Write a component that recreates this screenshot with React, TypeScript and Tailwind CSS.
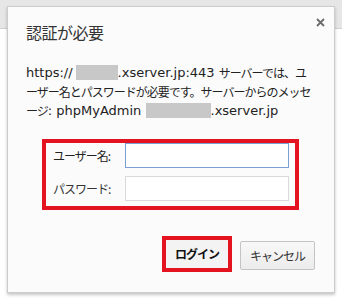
import React from "react";

const J = ({ children }: { children: React.ReactNode }) => (
  <span className="text-[12px] tracking-[-1px]" style={{ fontFamily: '"Noto Sans CJK JP", sans-serif' }}>
    {children}
  </span>
);

export default function App() {
  return (
    <div
      className="w-[342px] h-[300px] overflow-hidden bg-[linear-gradient(to_bottom,#e6e6e6_0,#e6e6e6_28px,#cfcfcf_28px,#cfcfcf_29px,#ffffff_29px)] pt-[6px] pl-[7px]"
      style={{ fontFamily: '"DejaVu Sans", "Noto Sans CJK JP", sans-serif' }}
    >
      <div className="w-[328px] h-[287px] bg-[#fbfbfb] border border-[#cccccc] shadow-[0_2px_3px_rgba(0,0,0,0.22)] flex flex-col">
        {/* header */}
        <div className="flex justify-between pl-[18px] pr-[9px] pt-[15px]">
          <div
            className="text-[16px] leading-[20px] text-[#333] tracking-[-0.5px]"
            style={{ fontFamily: '"Noto Sans CJK JP", sans-serif' }}
          >
            認証が必要
          </div>
          <svg width="9" height="9" viewBox="0 0 9 9" className="mt-[-4px]">
            <path d="M1 1L8 8M8 1L1 8" stroke="#6b6b6b" strokeWidth="1.8" />
          </svg>
        </div>
        {/* message */}
        <div className="mt-[21px] pl-[18px] text-[13px] leading-[19px] text-[#222]">
          <div className="flex items-center whitespace-nowrap h-[19px]">
            <span>https://</span>
            <span className="inline-block w-[42px] h-[15px] bg-[#c8c8c8] ml-[3px]" />
            <span>.xserver.jp:443&nbsp;</span>
            <J>サーバーでは、ユ</J>
          </div>
          <div className="flex items-center whitespace-nowrap h-[19px]">
            <J>ーザー名とパスワードが必要です。サーバーからのメッセ</J>
          </div>
          <div className="flex items-center whitespace-nowrap h-[19px]">
            <J>ージ</J>
            <span>: phpMyAdmin&nbsp;</span>
            <span className="inline-block w-[65px] h-[15px] bg-[#c8c8c8]" />
            <span>.xserver.jp</span>
          </div>
        </div>
        {/* form */}
        <div className="mt-[19px] ml-[34px] w-[257px] h-[71px] border-4 border-[#e3131f] flex flex-col pl-[7px] pr-[6px] gap-[8px]">
          <div className="flex items-center h-[25px]">
            <div className="w-[72px] text-[#222] leading-none">
              <J>ユーザー名:</J>
            </div>
            <div className="flex-1 h-[25px] bg-white border border-[#7d9fd6]" />
          </div>
          <div className="flex items-center h-[25px]">
            <div className="w-[72px] text-[#333] leading-none">
              <J>パスワード:</J>
            </div>
            <div className="flex-1 h-[25px] bg-white border border-[#dadada]" />
          </div>
        </div>
        {/* buttons */}
        <div className="mt-[26px] flex justify-end items-start pr-[19px] gap-[8px]">
          <div className="w-[70px] h-[36px] border-4 border-[#e3131f] flex">
            <div className="flex-1 flex items-center justify-center bg-[#f3f3f3] font-bold text-[#111]">
              <J>ログイン</J>
            </div>
          </div>
          <div className="w-[75px] h-[29px] mt-[5px] rounded-[2px] border border-[#c4c4c4] bg-[linear-gradient(to_bottom,#f8f8f8,#ececec)] flex items-center justify-center text-[#333]">
            <J>キャンセル</J>
          </div>
        </div>
      </div>
    </div>
  );
}
